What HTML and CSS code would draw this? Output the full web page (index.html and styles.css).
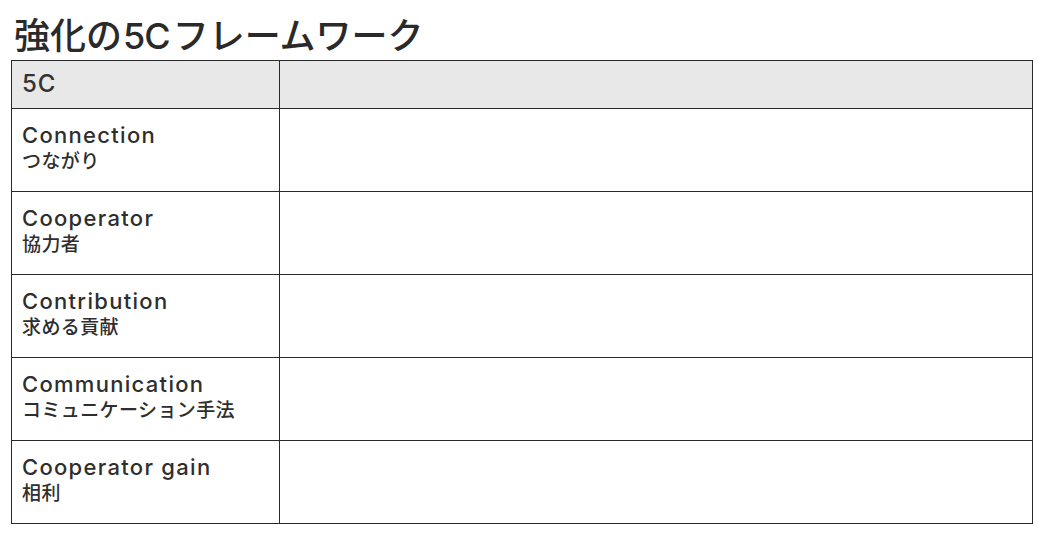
FILE: index.html
```html
<!DOCTYPE html>
<html lang="ja">
<head>
<meta charset="utf-8">
<link rel="stylesheet" href="styles.css">
</head>
<body>
<div class="page">
  <h1 class="title">強化の<span class="lat">5C</span>フレームワーク</h1>
  <table class="grid">
    <thead>
      <tr><th class="c1">5C</th><th class="c2"></th></tr>
    </thead>
    <tbody>
      <tr><td><div class="en">Connection</div><div class="ja">つながり</div></td><td></td></tr>
      <tr><td><div class="en">Cooperator</div><div class="ja">協力者</div></td><td></td></tr>
      <tr><td><div class="en">Contribution</div><div class="ja">求める貢献</div></td><td></td></tr>
      <tr><td><div class="en">Communication</div><div class="ja">コミュニケーション手法</div></td><td></td></tr>
      <tr><td><div class="en">Cooperator gain</div><div class="ja">相利</div></td><td></td></tr>
    </tbody>
  </table>
</div>
</body>
</html>
```

FILE: styles.css
```css
html, body {
  margin: 0;
  padding: 0;
  background: #ffffff;
}
body {
  font-family: Inter, "Noto Sans CJK JP", sans-serif;
  color: #2e2e2e;
}
.page {
  padding: 7px 24px 0 11px;
}
.title {
  margin: 0;
  font-family: "Noto Sans CJK JP", sans-serif;
  font-size: 36px;
  font-weight: 500;
  line-height: 53px;
  height: 53px;
  color: #2a2a2a;
  padding-left: 3px;
}
.title .lat {
  font-family: Inter, sans-serif;
  font-weight: 500;
  letter-spacing: -1px;
  margin: 0 3px 0 1px;
}
.grid {
  border-collapse: collapse;
  width: 1022px;
  table-layout: fixed;
}
.grid th, .grid td {
  border: 1px solid #2a2a2a;
  text-align: left;
  vertical-align: top;
  padding: 0 10px;
}
.grid th {
  box-sizing: border-box;
  background: #e8e8e8;
  height: 48px;
  vertical-align: middle;
  font-size: 24px;
  font-weight: 500;
  letter-spacing: 1px;
  color: #333;
  padding-bottom: 2px;
}
.grid .c1 { width: 268px; }
.grid td {
  box-sizing: border-box;
  height: 83px;
  padding-top: 13px;
}
.en {
  font-size: 22px;
  line-height: 26px;
  font-weight: 500;
  letter-spacing: 1.3px;
  color: #2e2e2e;
}
.ja {
  font-family: "Noto Sans CJK JP", sans-serif;
  font-size: 19px;
  line-height: 24px;
  font-weight: 500;
  letter-spacing: 0.4px;
  color: #2e2e2e;
}
```
